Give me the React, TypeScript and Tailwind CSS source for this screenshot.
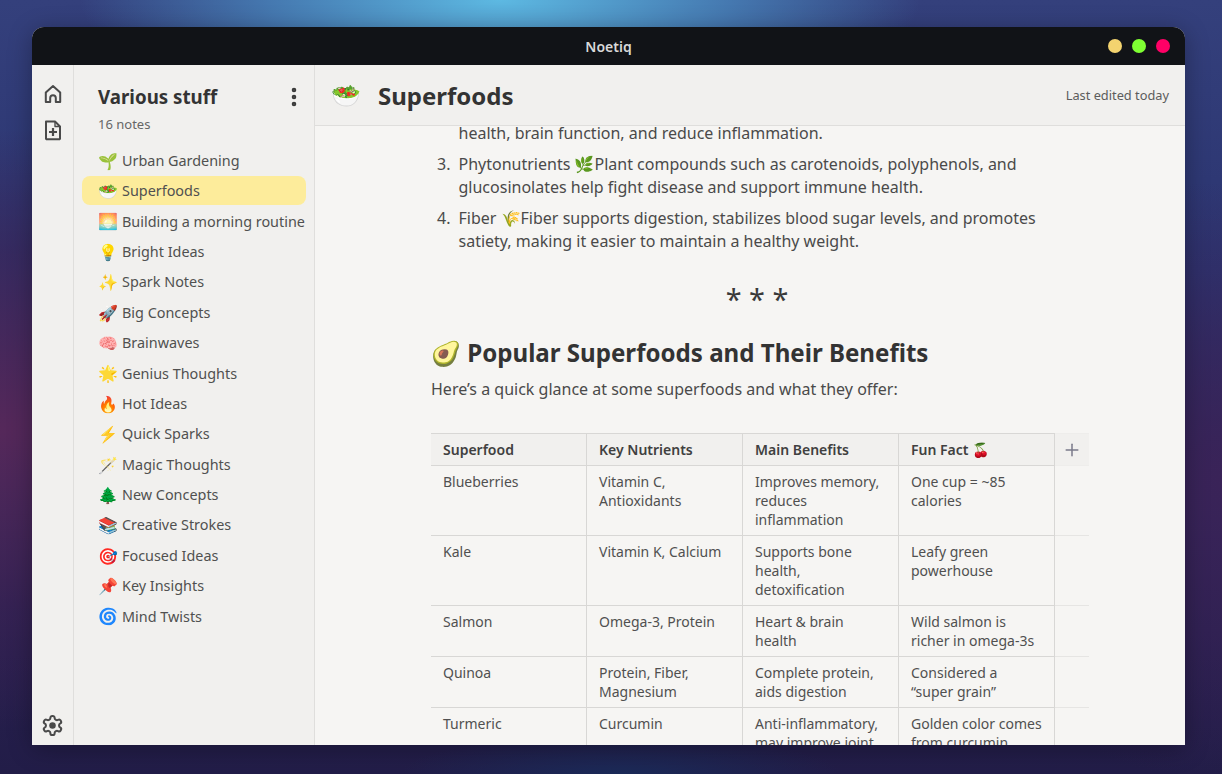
import { EllipsisVertical, Plus } from "lucide-react";

const notes: [string, string][] = [
  ["🌱", "Urban Gardening"],
  ["🥗", "Superfoods"],
  ["🌅", "Building a morning routine"],
  ["💡", "Bright Ideas"],
  ["✨", "Spark Notes"],
  ["🚀", "Big Concepts"],
  ["🧠", "Brainwaves"],
  ["🌟", "Genius Thoughts"],
  ["🔥", "Hot Ideas"],
  ["⚡", "Quick Sparks"],
  ["🪄", "Magic Thoughts"],
  ["🌲", "New Concepts"],
  ["📚", "Creative Strokes"],
  ["🎯", "Focused Ideas"],
  ["📌", "Key Insights"],
  ["🌀", "Mind Twists"],
];

const rows: string[][] = [
  ["Blueberries", "Vitamin C, Antioxidants", "Improves memory, reduces inflammation", "One cup = ~85 calories"],
  ["Kale", "Vitamin K, Calcium", "Supports bone health, detoxification", "Leafy green powerhouse"],
  ["Salmon", "Omega-3, Protein", "Heart & brain health", "Wild salmon is richer in omega-3s"],
  ["Quinoa", "Protein, Fiber, Magnesium", "Complete protein, aids digestion", "Considered a “super\u00a0grain”"],
  ["Turmeric", "Curcumin", "Anti-inflammatory, may improve joint", "Golden color comes from curcumin"],
];

function HomeIcon() {
  return (
    <svg width="22" height="22" viewBox="0 0 22 22" fill="none" stroke="currentColor" strokeWidth="2" strokeLinejoin="round">
      <path d="M11 3 L3.8 9.4 V19 H8.2 V15 a2.8 2.8 0 0 1 5.6 0 V19 H18.2 V9.4 Z" />
    </svg>
  );
}

function NewNoteIcon() {
  return (
    <svg width="22" height="22" viewBox="0 0 22 22" fill="none" stroke="currentColor" strokeWidth="2" strokeLinejoin="round">
      <path d="M4 2.5 H13 L18 7.5 V19.5 a0.8 0.8 0 0 1 -0.8 0.8 H4.8 a0.8 0.8 0 0 1 -0.8 -0.8 Z" />
      <path d="M13 2.5 V7.5 H18" strokeWidth="1.4" />
      <path d="M7 13 H15 M11 9 V17" strokeWidth="2.2" />
    </svg>
  );
}

function GearIcon() {
  return (
    <svg width="23" height="23" viewBox="0 0 24 24" fill="none" stroke="currentColor" strokeWidth="2.1" strokeLinejoin="round">
      <path d="M12.22 2h-.44a2 2 0 0 0-2 2v.18a2 2 0 0 1-1 1.73l-.43.25a2 2 0 0 1-2 0l-.15-.08a2 2 0 0 0-2.73.73l-.22.38a2 2 0 0 0 .73 2.73l.15.1a2 2 0 0 1 1 1.72v.51a2 2 0 0 1-1 1.74l-.15.09a2 2 0 0 0-.73 2.73l.22.38a2 2 0 0 0 2.73.73l.15-.08a2 2 0 0 1 2 0l.43.25a2 2 0 0 1 1 1.73V20a2 2 0 0 0 2 2h.44a2 2 0 0 0 2-2v-.18a2 2 0 0 1 1-1.73l.43-.25a2 2 0 0 1 2 0l.15.08a2 2 0 0 0 2.73-.73l.22-.39a2 2 0 0 0-.73-2.73l-.15-.08a2 2 0 0 1-1-1.74v-.5a2 2 0 0 1 1-1.74l.15-.09a2 2 0 0 0 .73-2.73l-.22-.38a2 2 0 0 0-2.73-.73l-.15.08a2 2 0 0 1-2 0l-.43-.25a2 2 0 0 1-1-1.73V4a2 2 0 0 0-2-2z" />
      <circle cx="12" cy="12" r="3.4" fill="currentColor" stroke="none" />
    </svg>
  );
}

export default function App() {
  return (
    <div className="h-[774px] w-[1222px] overflow-hidden pl-[32px] pt-[27px] font-['Noto_Sans','Open_Sans',sans-serif] text-[#4a4a4a] bg-[radial-gradient(ellipse_420px_120px_at_500px_0px,#5db9e2_0%,rgba(72,130,185,0.85)_55%,rgba(60,80,140,0)_100%),radial-gradient(ellipse_500px_300px_at_0px_430px,#55285a_0%,rgba(60,35,85,0.6)_60%,rgba(40,30,80,0)_100%),radial-gradient(ellipse_300px_300px_at_1222px_480px,#3a2358_0%,rgba(40,30,80,0)_100%),radial-gradient(ellipse_220px_40px_at_620px_774px,#1b2a58_0%,rgba(30,30,70,0)_100%),linear-gradient(180deg,#34407c_0%,#2b3470_35%,#2a2050_75%,#221d48_100%)]">
      <div className="flex h-[718px] w-[1153px] flex-col overflow-hidden rounded-t-[12px] bg-[#f1f0ee] shadow-[0_4px_24px_rgba(0,0,0,0.3)]">
        <div className="relative flex h-[38px] shrink-0 items-center justify-center bg-[#111317]">
          <span className="text-[14px] font-semibold text-[#d9d9d9]">Noetiq</span>
          <div className="absolute right-[15px] top-[12px] flex gap-[10px]">
            <span className="h-[14px] w-[14px] rounded-full bg-[#f3d36f]" />
            <span className="h-[14px] w-[14px] rounded-full bg-[#7fff33]" />
            <span className="h-[14px] w-[14px] rounded-full bg-[#ff0066]" />
          </div>
        </div>
        <div className="flex min-h-0 flex-1">
          <div className="flex w-[42px] shrink-0 flex-col items-center justify-between border-r border-[#dfdedc] pb-[8px] pt-[18px] text-[#4a4a4a]">
            <div className="flex flex-col items-center gap-[14px]">
              <HomeIcon />
              <NewNoteIcon />
            </div>
            <GearIcon />
          </div>
          <div className="w-[241px] shrink-0 border-r border-[#dfdedc] px-[8px]">
            <div className="flex items-center justify-between pl-[16px] pr-[0px] pt-[18px]">
              <span className="text-[18.72px] font-bold leading-[28px] text-[#333]">Various stuff</span>
              <EllipsisVertical size={24} strokeWidth={2.6} className="text-[#3a3a3a]" />
            </div>
            <div className="mt-[4px] pl-[16px] text-[13px] leading-[18px] text-[#666]">16 notes</div>
            <div className="mt-[13.1px] flex flex-col gap-[1.4px]">
              {notes.map(([e, n]) => (
                <div
                  key={n}
                  className={`flex h-[29px] items-center whitespace-nowrap rounded-[8px] pl-[16px] text-[14.4px] text-[#505050] ${n === "Superfoods" ? "bg-[#fdec9b]" : ""}`}
                >
                  <span className="w-[24px] shrink-0 text-[16px]">{e}</span>
                  {n}
                </div>
              ))}
            </div>
          </div>
          <div className="flex min-w-0 flex-1 flex-col bg-[#f6f5f3]">
            <div className="z-10 flex h-[61px] shrink-0 items-center justify-between border-b border-[#dfdedc] bg-[#f1f0ee] pl-[16px] pr-[16px]">
              <div className="flex items-center gap-[17px]">
                <span className="w-[30px] text-[24px] leading-none">🥗</span>
                <span className="pt-[2px] text-[24px] font-bold text-[#333]">Superfoods</span>
              </div>
              <span className="pt-[2px] text-[12.8px] text-[#5c5c5c]">Last edited today</span>
            </div>
            <div className="min-h-0 flex-1 overflow-hidden">
              <div className="-mt-[4px] ml-[116px] w-[658px] text-[16px] leading-[23px] text-[#4a4a4a]">
                <ol className="ml-[27.5px] w-[600px]">
                  <li>health, brain function, and reduce inflammation.</li>
                  <li className="relative mt-[8px]">
                    <span className="absolute -left-[21.5px]">3.</span>
                    Phytonutrients 🌿Plant compounds such as carotenoids, polyphenols, and glucosinolates help fight disease and support immune health.
                  </li>
                  <li className="relative mt-[8px]">
                    <span className="absolute -left-[21.5px]">4.</span>
                    Fiber 🌾Fiber supports digestion, stabilizes blood sugar levels, and promotes satiety, making it easier to maintain a healthy weight.
                  </li>
                </ol>
                <div className="mt-[24px] w-[652px] text-center text-[28.8px] leading-[44px] text-[#3a3a3a]">* * *</div>
                <h2 className="mt-[16px] text-[24.1px] font-bold leading-[32px] text-[#333]">🥑 Popular Superfoods and Their Benefits</h2>
                <p className="mt-[8px] leading-[24px]">Here’s a quick glance at some superfoods and what they offer:</p>
                <table className="mt-[32px] w-[658px] table-fixed border-collapse text-[14px] leading-[19px] text-[#505050]">
                  <colgroup>
                    <col className="w-[155px]" />
                    <col className="w-[156px]" />
                    <col className="w-[156px]" />
                    <col className="w-[156px]" />
                    <col className="w-[35px]" />
                  </colgroup>
                  <thead>
                    <tr className="h-[32px]">
                      {["Superfood", "Key Nutrients", "Main Benefits", "Fun Fact 🍒"].map((h) => (
                        <th key={h} className="border-y border-r border-[#d8d7d5] bg-[#f1f0ee] pl-[12.5px] pr-[10px] text-left font-semibold text-[#404040] first:pl-[12px]">
                          {h}
                        </th>
                      ))}
                      <th className="border-y border-[#eeedeb] bg-[#f1f0ee] p-0 text-center align-middle">
                        <Plus size={20} strokeWidth={1.8} className="mx-auto text-[#7a7a8a]" />
                      </th>
                    </tr>
                  </thead>
                  <tbody>
                    {rows.map((r) => (
                      <tr key={r[0]}>
                        {r.map((c, i) => (
                          <td key={i} className="border-y border-r border-[#d8d7d5] py-[6px] pl-[12.5px] pr-[10px] align-top first:pl-[12px]">
                            {c}
                          </td>
                        ))}
                        <td className="border-y border-[#e6e5e3]" />
                      </tr>
                    ))}
                  </tbody>
                </table>
              </div>
            </div>
          </div>
        </div>
      </div>
    </div>
  );
}
